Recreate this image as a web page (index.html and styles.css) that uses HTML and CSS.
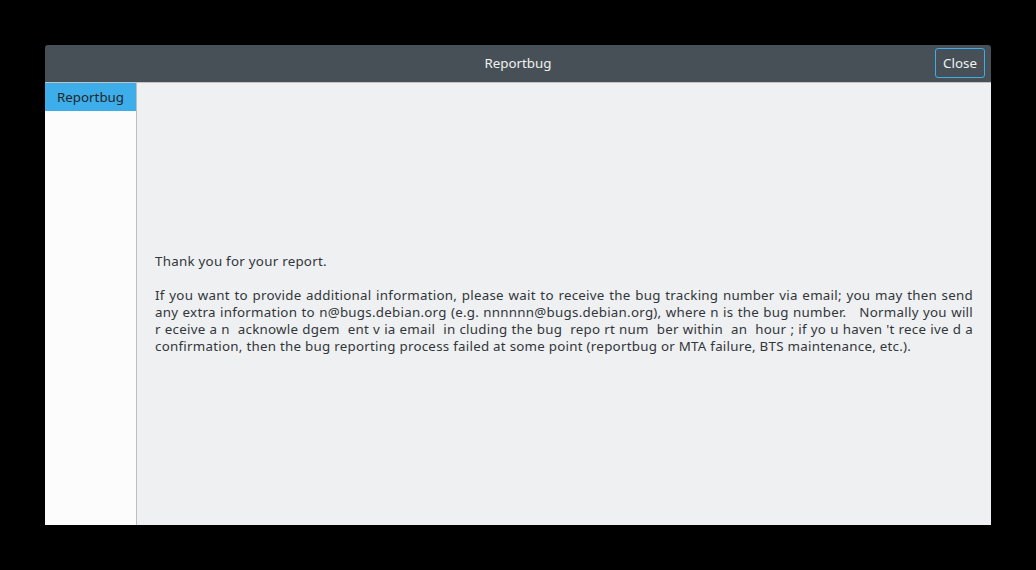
FILE: index.html
```html
<!DOCTYPE html>
<html>
<head>
<meta charset="utf-8">
<link rel="stylesheet" href="styles.css">
</head>
<body>
<div class="window">
  <div class="titlebar">
    <div class="title">Reportbug</div>
    <button class="close">Close</button>
  </div>
  <div class="body">
    <div class="sidebar">
      <div class="item selected">Reportbug</div>
    </div>
    <div class="content">
      <div class="text">
        <div class="line">Thank you for your report.</div>
        <div class="line blank">&nbsp;</div>
        <div class="line just">If you want to provide additional information, please wait to receive the bug tracking number via email; you may then send</div>
        <div class="line just">any extra information to n@bugs.debian.org (e.g. nnnnnn@bugs.debian.org), where n is the bug number.&nbsp;&nbsp; Normally you will</div>
        <div class="line just">r eceive a n&nbsp; acknowle dgem&nbsp; ent v ia email&nbsp; in cluding the bug&nbsp; repo rt num&nbsp; ber within&nbsp; an&nbsp; hour ; if yo u haven 't rece ive d a</div>
        <div class="line">confirmation, then the bug reporting process failed at some point (reportbug or MTA failure, BTS maintenance, etc.).</div>
      </div>
    </div>
  </div>
</div>
</body>
</html>
```
FILE: styles.css
```css
html, body {
  margin: 0;
  padding: 0;
  background: #000;
}
body {
  padding: 45px;
  width: 1036px;
  height: 570px;
  box-sizing: border-box;
  font-family: "Noto Sans", "DejaVu Sans", sans-serif;
  font-size: 13.33px;
}
.window {
  width: 946px;
  height: 480px;
  display: flex;
  flex-direction: column;
}
.titlebar {
  height: 37px;
  background: #475057;
  border-radius: 3px 3px 0 0;
  border-bottom: 1px solid #c0c4c7;
  position: relative;
  display: flex;
  align-items: center;
  justify-content: center;
}
.title {
  color: #eff0f1;
  font-size: 13.33px;
  margin-top: -1px;
}
.close {
  position: absolute;
  right: 6px;
  top: 3px;
  width: 50px;
  height: 30px;
  border: 1px solid #3daee9;
  border-radius: 3px;
  background: #475057;
  color: #eff0f1;
  font-family: "Noto Sans", "DejaVu Sans", sans-serif;
  font-size: 13.33px;
  padding: 0;
}
.body {
  flex: 1;
  display: flex;
}
.sidebar {
  width: 91px;
  background: #fcfcfc;
  border-right: 1px solid #bcbfc2;
}
.item {
  height: 28px;
  line-height: 28px;
  padding-left: 12px;
  color: #31363b;
}
.item.selected {
  background: #3daee9;
  color: #232629;
}
.content {
  flex: 1;
  background: #eff0f1;
  display: flex;
  align-items: center;
  padding: 0 18px;
}
.text {
  width: 100%;
  color: #31363b;
  line-height: 17px;
  letter-spacing: 0.26px;
}
.line.just {
  text-align: justify;
  text-align-last: justify;
}
```
